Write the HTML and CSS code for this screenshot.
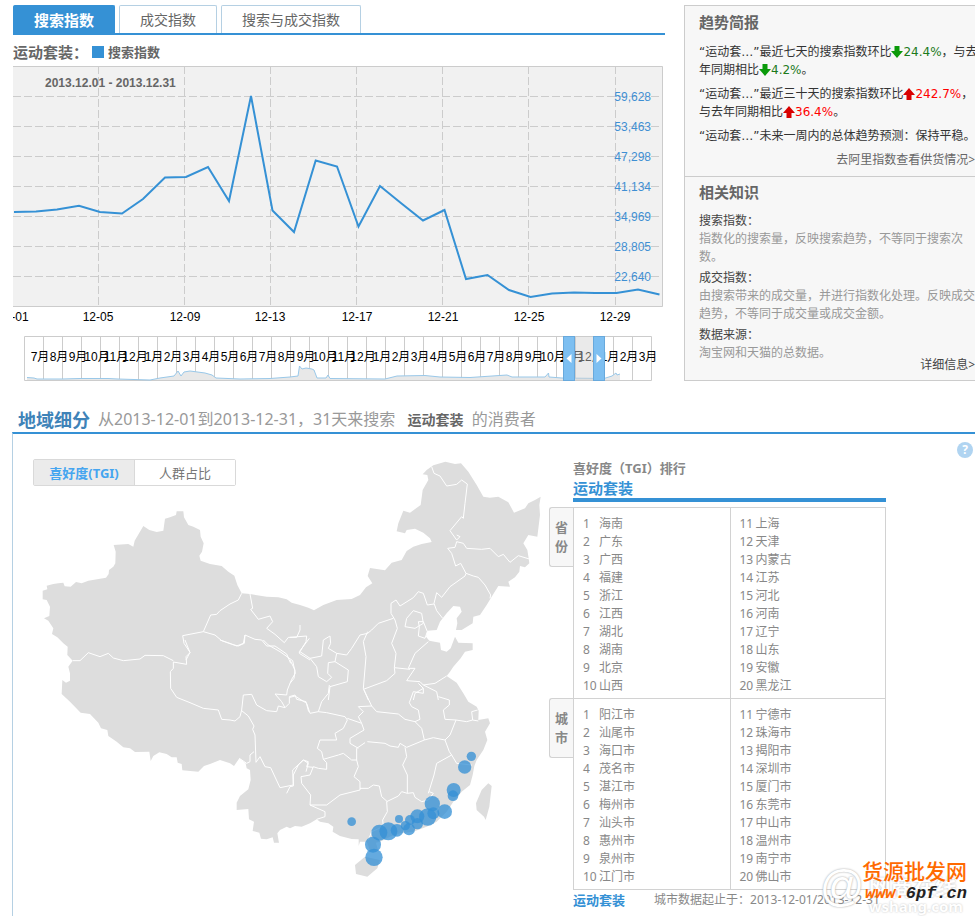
FILE: index.html
```html
<!DOCTYPE html>
<html lang="zh-CN">
<head>
<meta charset="utf-8">
<title>搜索指数 - 运动套装</title>
<link rel="stylesheet" href="styles.css">
</head>
<body>
<div class="page">
<div class="top">
  <main class="trend">
    <nav class="tabs">
      <button class="tab tab-on" type="button">搜索指数</button>
      <button class="tab" type="button">成交指数</button>
      <button class="tab tab-wide" type="button">搜索与成交指数</button>
    </nav>
    <div class="legend"><span class="legend-word">运动套装：</span><i class="swatch"></i><span class="legend-name">搜索指数</span></div>
    <svg class="chart" viewBox="13 66 652 260" role="img" aria-label="搜索指数">
      <rect x="13" y="66" width="650" height="241" fill="#f1f1f1"/>
      <path d="M13 66.5H662.5V306.500H13" fill="none" stroke="#ccc"/>
      <path d="M13 96.500H662M13 126.500H662M13 156.500H662M13 186.500H662M13 216.500H662M13 246.500H662M13 276.500H662M98.500 66V306M184.500 66V306M270.500 66V306M356.500 66V306M442.500 66V306M528.500 66V306M615.500 66V306" fill="none" stroke="#ccc" stroke-dasharray="8 3"/>
      <polyline fill="none" stroke="#3591d5" stroke-width="2" points="14,212 36,211.500 57,209.500 79,205.700 100,212 122,213.500 143,199 165,177.500 186,177 208,167 229,201 251,96 272.500,210.500 294,232 315.700,160.500 337,166.500 358.500,226.500 380,186 401.500,203.500 423,220.500 444.500,210 466,279 487.500,275 509,290 530.500,297 552,293.500 574,292.500 595,293 616.500,293 638,289.500 659.500,294.500"/>
      <text class="span" x="45" y="87">2013.12.01 - 2013.12.31</text>
      <g class="ylab"><text x="651" y="101">59,628</text><text x="651" y="131">53,463</text><text x="651" y="161">47,298</text><text x="651" y="191">41,134</text><text x="651" y="221">34,969</text><text x="651" y="251">28,805</text><text x="651" y="281">22,640</text></g>
      <g class="xlab"><text x="20" y="321">-01</text><text x="98" y="321">12-05</text><text x="185" y="321">12-09</text><text x="270" y="321">12-13</text><text x="357" y="321">12-17</text><text x="443" y="321">12-21</text><text x="529" y="321">12-25</text><text x="615" y="321">12-29</text></g>
    </svg>
    <div class="range">
      <svg class="range-plot" viewBox="13 336 652 45" role="img" aria-label="时间范围">
        <path id="months" fill="none" stroke="#ccc"/>
        <path d="M27 377.500 34 378 37 379 62 379 80 378.500 108 378.500 118 379 150 380 160 378 174 376 178 371 181 376 184 372 190 371 205 373 212 375 216 378 240 379 270 378.500 290 377 298 376 299.500 366 302 369 306 368 312 369 314 370 317 378 326 378 328 375 330 378.500 385 379 397 376 425 375.500 440 377 470 377.500 507 375 512 377 545 377 548.500 373 549 377 562 378 604 378.500 612 376 616 373 617 375 620 374 620 380 27 380Z" fill="#e8e8e8"/>
        <path d="M27 377.500 34 378 37 379 62 379 80 378.500 108 378.500 118 379 150 380 160 378 174 376 178 371 181 376 184 372 190 371 205 373 212 375 216 378 240 379 270 378.500 290 377 298 376 299.500 366 302 369 306 368 312 369 314 370 317 378 326 378 328 375 330 378.500 385 379 397 376 425 375.500 440 377 470 377.500 507 375 512 377 545 377 548.500 373 549 377 562 378 604 378.500 612 376 616 373 617 375 620 374" fill="none" stroke="#99c8e9"/>
        <g id="month-labels" class="xlab"></g>
        <rect x="575" y="337" width="18" height="43" fill="#d0d0d0" opacity=".45"/>
      </svg>
      <button class="handle handle-from" type="button" aria-label="起始时间"><svg viewBox="0 0 12 45"><path d="M9 17V28L3 22.500Z" fill="#fff"/></svg></button>
      <button class="handle handle-to" type="button" aria-label="结束时间"><svg viewBox="0 0 12 45"><path d="M3 17V28L9 22.500Z" fill="#fff"/></svg></button>
    </div>
  </main>
  <aside class="side">
    <section class="brief">
      <h3>趋势简报</h3>
      <p>“运动套…”最近七天的搜索指数环比<svg class="arrow" viewBox="0 0 12 12"><path d="M3.500 0H8.500V5H12L6 12 0 5H3.500Z" fill="#0a9a0a"/></svg><span class="down">24.4%</span>，与去<br>年同期相比<svg class="arrow" viewBox="0 0 12 12"><path d="M3.500 0H8.500V5H12L6 12 0 5H3.500Z" fill="#0a9a0a"/></svg><span class="down">4.2%</span>。</p>
      <p>“运动套…”最近三十天的搜索指数环比<svg class="arrow" viewBox="0 0 12 12"><path d="M3.500 12H8.500V7H12L6 0 0 7H3.500Z" fill="#d90000"/></svg><span class="up">242.7%</span>，<br>与去年同期相比<svg class="arrow" viewBox="0 0 12 12"><path d="M3.500 12H8.500V7H12L6 0 0 7H3.500Z" fill="#d90000"/></svg><span class="up">36.4%</span>。</p>
      <p>“运动套…”未来一周内的总体趋势预测：保持平稳。</p>
      <a class="more" href="#supply">去阿里指数查看供货情况&gt;</a>
    </section>
    <section class="know">
      <h3>相关知识</h3>
      <dl>
        <dt>搜索指数：</dt><dd>指数化的搜索量，反映搜索趋势，不等同于搜索次数。</dd>
        <dt>成交指数：</dt><dd>由搜索带来的成交量，并进行指数化处理。反映成交趋势，不等同于成交量或成交金额。</dd>
        <dt>数据来源：</dt><dd>淘宝网和天猫的总数据。</dd>
      </dl>
      <a class="more more-dark" href="#detail">详细信息&gt;</a>
    </section>
  </aside>
</div>

<header class="region-head"><h2>地域细分</h2><p>从2013-12-01到2013-12-31，31天来搜索 <b>运动套装</b> 的消费者</p></header>
<section class="region">
  <div class="map-side">
    <div class="switch"><button class="switch-on" type="button">喜好度(TGI)</button><button type="button">人群占比</button></div>
    <svg class="map" viewBox="99 1374 1539 1272" role="img" aria-label="中国地图">
      <g fill="#ddd">
        <path d="M128 1772 142 1768 140 1757 160 1752 175 1750 190 1748 194 1759 212 1760 228 1746 245 1750 265 1742 318 1733 326 1722 327 1710 340 1700 346 1690 347 1655 341 1635 385 1632 400 1640 404 1622 430 1578 448 1590 470 1596 490 1592 495 1556 510 1552 528 1545 530 1534 550 1534 552 1552 565 1575 580 1580 600 1590 602 1610 611 1630 606 1655 598 1667 602 1682 630 1692 665 1698 685 1715 703 1727 712 1755 725 1780 750 1782 800 1790 835 1792 860 1798 875 1808 900 1815 925 1823 942 1831 970 1815 1010 1800 1055 1797 1080 1785 1098 1762 1117 1750 1103 1728 1110 1704 1155 1711 1175 1688 1205 1680 1220 1653 1240 1640 1265 1632 1295 1626 1290 1615 1270 1598 1245 1586 1220 1590 1215 1600 1190 1594 1195 1570 1210 1532 1230 1538 1262 1515 1268 1470 1285 1440 1282 1425 1268 1423 1280 1410 1300 1396 1336 1385 1365 1392 1383 1390 1405 1415 1430 1455 1450 1490 1470 1493 1495 1490 1525 1507 1542 1538 1575 1525 1585 1510 1605 1500 1622 1490 1618 1515 1620 1545 1612 1610 1585 1605 1570 1630 1582 1650 1586 1675 1588 1690 1575 1702 1560 1698 1558 1715 1545 1732 1525 1745 1530 1760 1495 1758 1475 1790 1460 1815 1440 1845 1420 1850 1418 1870 1385 1890 1368 1890 1372 1870 1370 1855 1385 1835 1380 1820 1360 1818 1340 1840 1320 1865 1310 1890 1282 1892 1278 1910 1288 1922 1320 1928 1323 1950 1340 1955 1352 1945 1365 1910 1375 1928 1418 1930 1418 1950 1395 1955 1382 1975 1360 2000 1350 2015 1340 2028 1370 2048 1390 2080 1405 2105 1430 2120 1436 2132 1435 2160 1465 2155 1470 2170 1455 2195 1462 2220 1450 2250 1430 2280 1423 2298 1418 2325 1410 2355 1385 2375 1360 2405 1340 2435 1310 2465 1280 2480 1240 2495 1200 2500 1170 2510 1140 2525 1128 2528 1134 2550 1110 2552 1100 2525 1080 2525 1076 2538 1076 2518 1055 2517 1020 2508 998 2495 1000 2480 985 2470 960 2465 950 2458 930 2470 905 2480 885 2478 870 2485 860 2480 840 2490 832 2500 837 2528 822 2528 818 2512 800 2518 783 2516 778 2498 758 2493 762 2465 747 2458 745 2427 710 2430 710 2408 720 2388 745 2368 752 2340 750 2310 740 2305 737 2290 718 2275 702 2298 690 2290 660 2280 630 2292 612 2298 595 2315 547 2311 545 2292 533 2288 530 2272 515 2272 500 2262 478 2257 460 2268 452 2283 448 2255 405 2256 390 2245 370 2242 350 2225 325 2208 322 2190 303 2185 295 2168 270 2142 242 2138 210 2105 185 2082 187 2040 198 2048 210 2042 210 2020 205 2000 218 1982 202 1965 203 1940 190 1930 172 1912 156 1902 160 1885 145 1862 132 1855 148 1848 150 1820 140 1800 128 1798Z"/>
        <path d="M1095 2570 1065 2595 1068 2622 1102 2630 1132 2605 1140 2580ZM1465 2350 1475 2358 1468 2420 1457 2460 1452 2450 1430 2430 1428 2410 1445 2370Z"/>
      </g>
      <g fill="none" stroke="#fff" stroke-width="3" stroke-linejoin="round">
        <path transform="translate(0 1200)" d="M725 580 715 600 690 612 660 632 650 643 632 645 610 695 548 707 552 730 570 757 558 780M610 695 645 705 665 722 695 733 715 738 733 730 735 705 765 718 785 720 800 738 825 738 860 762 872 790M750 582 758 625 752 628 775 658 810 648 818 665 800 685 825 703 853 728 865 712 890 712 900 690 900 675"/>
        <path transform="translate(90 1920)" d="M128 62 150 62 175 38 210 50 235 40 250 54 280 62 330 57 345 46 400 47 430 62M465 0 480 38 468 50 470 73 430 66 430 85 421 95 422 145 440 172 480 188 520 205 565 210 575 238 600 240 615 243 630 230 635 210 640 165 665 163 680 195 710 212 740 215 745 198 765 203 755 185 735 162 770 165 772 150 785 118 796 100 788 62 750 35 715 15 700 0M570 0 600 10 620 18 640 10 645-15M765 203 778 190 778 170 795 165 800 178 828 185 836 215M635 212 655 228 672 258 668 268 675 285 678 367 690 350 705 380 722 383 750 443 790 435 790 405 805 375 820 360 835 370 828 395M628 355 650 370 660 365 660 345 672 335M840 60 808 40 808 35 838-5"/>
        <path transform="translate(870 1320)" d="M425 80 432 100 450 108 470 138 500 133 515 120 532 132 525 190 520 235 515 230 480 272 500 300 510 290 500 285M500 305 520 310 530 325 575 328 600 325 625 350 640 343 660 367 685 347 718 357M500 305 495 322 473 325 485 340 497 378 512 370 528 400 525 408 480 440 455 472 440 458 432 490 440 512 458 535M528 400 550 408 565 412 585 435 602 465 600 475M432 492 412 495 400 460 385 455 370 473 330 498 318 480 303 490 303 520 315 540 322 565 305 610 318 640 313 683 360 688M310 535 265 550 245 570 233 580 210 585 185 625 170 645 140 640 135 665 175 690 172 725 120 740 115 780M233 575 220 605 228 650 220 745 235 780M220 748 290 722 315 700 313 683M370 512 395 520 400 550 375 565 345 560 350 535ZM385 545 400 545 412 575 405 595 385 588 388 560ZM415 605 375 640 355 685 375 685 350 722 390 725 400 735 435 730 470 708M385 730 400 745 375 760 370 780M400 735 440 755 445 780M0 592 50 588 48 605 30 635 60 655 95 648 100 600 120 588 122 610 115 625 140 640M60 655 80 680 85 710 110 725 125 712 113 700 115 668 135 665M0 660 15 690 12 715 0 730"/>
        <path transform="translate(870 1980)" d="M118 75 115 100 95 125 85 155 60 160 50 130 15 108 0 112M85 155 110 158 165 170 172 180 160 205 135 220 140 240 90 240 82 265 95 275 100 298 145 285 160 280 185 300 200 300 200 265 225 248M172 175 215 190 222 210 180 235 180 250 205 265M215 190 205 170 220 155 205 140 245 138 222 90M245 138 260 155 325 162 345 178 375 185 390 178 385 150 365 140 358 128 370 95 400 100 400 85M375 185 395 205 403 240 350 262 330 250 325 262 300 258 285 250 232 245M345 262 350 290 338 315 352 345 352 400 335 395 325 408 290 425 292 455 278 480 280 500 245 515 235 540M352 400 370 398 375 412 395 425 415 420 430 400 418 395M403 240 430 233 465 240 480 225 498 180 465 178 460 150 478 135 478 120 445 110M498 180 530 185 548 180 545 155 563 150M548 180 565 183M465 240 478 275 485 285 440 310 432 345 415 400M485 285 500 310 545 315M200 300 205 320 192 350 210 365 210 390 150 405 110 435 60 435 62 405 35 370 33 350 60 345 70 320 85 325 110 328 110 308 100 298M210 385 235 385 250 375 268 378 275 410 292 425M60 435 105 455 105 470 80 478M-10 400 0 380 10 378 8 330 40 300 55 305 50 320 70 322"/>
      </g>
      <g transform="translate(870 1980)" fill="#3591d5" fill-opacity=".77">
        <circle cx="544" cy="289" r="14"/><circle cx="524" cy="321" r="20"/><circle cx="491" cy="390" r="21"/><circle cx="489" cy="407" r="16"/><circle cx="427" cy="431" r="23"/><circle cx="464" cy="455" r="22"/><circle cx="430" cy="460" r="18"/><circle cx="413" cy="471" r="26"/><circle cx="382" cy="469" r="21"/><circle cx="382" cy="491" r="17"/><circle cx="360" cy="480" r="15"/><circle cx="327" cy="477" r="12"/><circle cx="346" cy="497" r="14"/><circle cx="357" cy="508" r="18"/><circle cx="321" cy="511" r="19"/><circle cx="295" cy="514" r="27"/><circle cx="268" cy="518" r="24"/><circle cx="249" cy="554" r="24"/><circle cx="252" cy="592" r="26"/><circle cx="185" cy="485" r="13"/>
      </g>
    </svg>
  </div>
  <div class="rank">
    <h4>喜好度（TGI）排行</h4>
    <h5>运动套装</h5>
    <div class="block"><div class="tag">省<br>份</div><div class="lists">
      <ol><li><i>1</i>海南</li><li><i>2</i>广东</li><li><i>3</i>广西</li><li><i>4</i>福建</li><li><i>5</i>浙江</li><li><i>6</i>江西</li><li><i>7</i>湖北</li><li><i>8</i>湖南</li><li><i>9</i>北京</li><li><i>10</i>山西</li></ol>
      <ol><li><i>11</i>上海</li><li><i>12</i>天津</li><li><i>13</i>内蒙古</li><li><i>14</i>江苏</li><li><i>15</i>河北</li><li><i>16</i>河南</li><li><i>17</i>辽宁</li><li><i>18</i>山东</li><li><i>19</i>安徽</li><li><i>20</i>黑龙江</li></ol>
    </div></div>
    <div class="block"><div class="tag">城<br>市</div><div class="lists lists-last">
      <ol><li><i>1</i>阳江市</li><li><i>2</i>汕尾市</li><li><i>3</i>海口市</li><li><i>4</i>茂名市</li><li><i>5</i>湛江市</li><li><i>6</i>梅州市</li><li><i>7</i>汕头市</li><li><i>8</i>惠州市</li><li><i>9</i>泉州市</li><li><i>10</i>江门市</li></ol>
      <ol><li><i>11</i>宁德市</li><li><i>12</i>珠海市</li><li><i>13</i>揭阳市</li><li><i>14</i>深圳市</li><li><i>15</i>厦门市</li><li><i>16</i>东莞市</li><li><i>17</i>中山市</li><li><i>18</i>温州市</li><li><i>19</i>南宁市</li><li><i>20</i>佛山市</li></ol>
    </div></div>
    <div class="rank-foot"><b>运动套装</b><span>城市数据起止于：2013-12-01/2013-12-31</span></div>
  </div>
  <a class="help" href="#help" aria-label="帮助">?</a>
  <div class="mark">
    <span class="mark-at">@</span><span class="mark-faint">网商在线<small>wshang.com</small></span>
    <span class="mark-name">货源批发网</span>
    <span class="mark-url"><em>www.</em>6pf.cn</span>
  </div>
</section>
</div>
<script src="months.js"></script>
</body>
</html>
```
FILE: months.js
```js
// Month cells of the range selector: July of the first year to March of the last.
const STEP = 19, LEFT = 24, COUNT = 33;
let grid = "M24.5 336.5H651.5V380.5H24.5Z";
const labels = document.getElementById("month-labels");
for (let i = 0; i < COUNT; i++) {
  if (i) grid += `M${LEFT + i * STEP + 0.5} 337V380`;
  const t = document.createElementNS("http://www.w3.org/2000/svg", "text");
  t.setAttribute("x", LEFT + 16 + i * STEP);
  t.setAttribute("y", 361);
  t.textContent = ((i + 6) % 12) + 1 + "月";
  labels.appendChild(t);
}
document.getElementById("months").setAttribute("d", grid);
```
FILE: styles.css
```css
* { box-sizing: border-box; }
body, h2, h3, h4, h5, p, dl, dd, ol { margin: 0; padding: 0; }
body {
  background: #fff;
  color: #333;
  font: 12px/18px "Noto Sans", "Noto Sans CJK SC", sans-serif;
}
button { font: inherit; padding: 0; cursor: pointer; }
a { text-decoration: none; }
svg { display: block; }
i { font-style: normal; }
.page { padding: 5px 0 0 12px; overflow: hidden; }

.top { display: grid; grid-template-columns: minmax(0, 1fr) 291px; column-gap: 19px; align-items: start; padding-left: 1px; }
.tabs { display: flex; gap: 4px; height: 30px; border-bottom: 2px solid #3591d5; }
.tab {
  width: 98px;
  border: 1px solid #b5d0e3;
  border-bottom: 0;
  border-radius: 2px 2px 0 0;
  background: #fff;
  color: #666;
  font-size: 14px;
}
.tab-wide { width: 140px; }
.tab-on { width: 102px; border-color: #3591d5; background: #3591d5; color: #fff; font-size: 15px; font-weight: bold; }
.legend { display: flex; align-items: center; height: 31px; padding-top: 2px; color: #666; font-weight: bold; }
.legend-word { width: 79px; font-size: 15px; white-space: nowrap; }
.swatch { width: 12px; height: 12px; margin-right: 4px; background: #3591d5; }
.legend-name { font-size: 13px; }
.chart, .range-plot { width: 100%; height: auto; }
.chart text, .range-plot text { font-family: "Liberation Sans", "Noto Sans CJK SC", sans-serif; font-size: 12px; }
.chart .span { fill: #666; font-weight: bold; }
.ylab { fill: #3f8fd3; text-anchor: end; }
.xlab { fill: #000; text-anchor: middle; }
.range { position: relative; margin-top: 10px; }
.handle {
  position: absolute;
  top: 0;
  width: 12px;
  height: 100%;
  border: 1px solid #68a9dc;
  background: #7dbff1;
}
.handle svg { width: 100%; height: 100%; }
.handle-from { left: 84.4%; }
.handle-to { left: 89%; }

.side { border: 1px solid #ccc; border-right: 0; background: #f7f7f7; }
.side section { padding: 6px 0 6px 14px; }
.side h3 { color: #666; font-size: 15px; line-height: 20px; }
.brief { height: 170px; }
.brief h3 { margin-bottom: 11px; }
.brief p { margin-bottom: 6px; font-family: "DejaVu Sans", "Noto Sans CJK SC", sans-serif; white-space: nowrap; }
.arrow { display: inline-block; width: 12px; height: 12px; vertical-align: -2px; }
.down { color: #1c7a1c; }
.up { color: #f00; }
.more { display: block; text-align: right; color: #666; white-space: nowrap; }
.side .know { padding-top: 5px; border-top: 1px solid #ccc; }
.know h3 { margin-bottom: 10px; }
.know dt { color: #444; }
.know dd { color: #999; margin-bottom: 3px; }
.more-dark { color: #444; margin-top: -9px; }

.region-head { display: flex; align-items: center; gap: 8px; height: 25px; margin-top: 26px; padding-left: 6px; white-space: nowrap; }
.region-head h2 { color: #3f83b8; font-size: 18px; line-height: 24px; }
.region-head p { color: #999; font-size: 16px; line-height: 24px; }
.region-head b { margin: 0 4px 0 8px; color: #666; font-size: 14px; }
.region {
  position: relative;
  display: grid;
  grid-template-columns: minmax(0, 536fr) minmax(337px, 337fr) 89fr;
  padding-bottom: 6px;
  border-top: 2px solid #3591d5;
  border-left: 1px solid #b5d0e3;
}
.map-side { padding: 25px 3px 0 20px; }
.switch { display: flex; width: 203px; height: 27px; border: 1px solid #d9d9d9; border-radius: 2px; }
.switch button { flex: 1; border: 0; background: #fff; color: #777; font-size: 13px; }
.switch .switch-on { border-right: 1px solid #d9d9d9; background: #ebebeb; color: #45a5f0; font-weight: bold; }
.map { width: 100%; height: auto; margin-top: -28px; pointer-events: none; }
.rank { padding-top: 24px; color: #888; }
.rank h4 { margin-left: 24px; font-size: 13px; line-height: 20px; }
.rank h5 { margin: 0 0 5px 24px; border-bottom: 4px solid #3591d5; color: #3591d5; font-size: 15px; line-height: 20px; }
.block { display: flex; align-items: flex-start; }
.tag {
  width: 24px;
  height: 60px;
  padding-top: 10px;
  border: 1px solid #d2d2d2;
  border-right: 0;
  border-radius: 3px 0 0 3px;
  background: #f7f7f7;
  font-size: 13px;
  font-weight: bold;
  line-height: 19px;
  text-align: center;
}
.lists { flex: 1; display: grid; grid-template-columns: 1fr 1fr; border: 1px solid #d2d2d2; border-bottom: 0; }
.lists-last { border-bottom: 1px solid #d2d2d2; }
.lists ol { padding: 7px 9px 3px; list-style: none; }
.lists ol + ol { border-left: 1px solid #d2d2d2; }
.lists li { display: flex; }
.lists i { width: 16px; }
.rank-foot { display: flex; gap: 29px; margin-left: 24px; line-height: 20px; white-space: nowrap; }
.rank-foot b { color: #3591d5; font-size: 13px; }
.help {
  position: absolute;
  top: 8px;
  right: 2px;
  width: 16px;
  height: 16px;
  border-radius: 50%;
  background: #b0d4f1;
  color: #fff;
  font-weight: bold;
  line-height: 16px;
  text-align: center;
}
.mark { position: absolute; right: 8px; bottom: 0; width: 148px; height: 60px; white-space: nowrap; }
.mark span { position: absolute; }
.mark-at { left: 0; top: 6px; color: #fff; font: italic 44px/48px "Liberation Sans", sans-serif; text-shadow: 0 0 2px #999; }
.mark-faint { right: 4px; bottom: 2px; color: #fff; font-size: 22px; line-height: 24px; font-weight: bold; text-shadow: 0 0 2px #bbb; }
.mark-faint small { display: block; font-size: 15px; line-height: 16px; }
.mark-name { right: 0; top: 3px; color: #ff6a00; font-size: 21px; font-weight: 500; line-height: 24px; }
.mark-url { right: 0; top: 26px; color: #222; font: italic bold 17px/24px "Liberation Mono", monospace; }
.mark-url em { color: #ff6a00; }
```
